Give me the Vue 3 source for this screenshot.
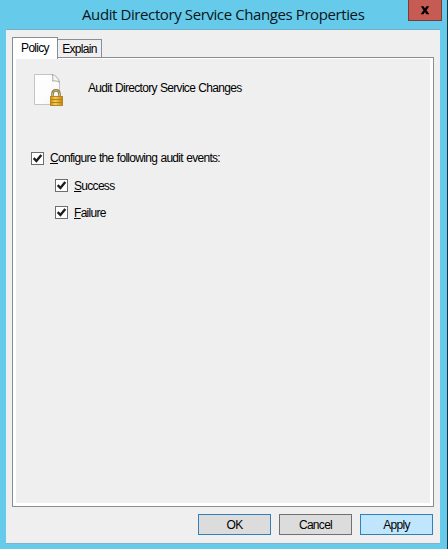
<template>
  <div class="window">
    <header class="titlebar">
      <h1 class="title">Audit Directory Service Changes Properties</h1>
      <button class="close" type="button" aria-label="Close">
        <svg width="10" height="9" viewBox="0 0 10 9">
          <path d="M0.8 0.3H3.6L5 2.6L6.4 0.3H9.2L6.5 4.2L9.4 8.2H6.5L5 5.9L3.5 8.2H0.6L3.5 4.2Z" fill="#000" />
        </svg>
      </button>
    </header>

    <main class="client">
      <nav class="tabs">
        <button
          v-for="tab in tabs"
          :key="tab"
          type="button"
          class="tab"
          :class="{ active: tab === activeTab }"
          @click="activeTab = tab"
        >{{ tab }}</button>
      </nav>

      <section class="panel">
        <div class="page">
          <div class="policy">
            <svg class="policy-icon" width="32" height="34" viewBox="0 0 32 34">
              <defs>
                <linearGradient id="paper" x1="0" y1="0" x2="1" y2="1">
                  <stop offset="0" stop-color="#fff" />
                  <stop offset="0.6" stop-color="#fcfcfc" />
                  <stop offset="1" stop-color="#f0f0f0" />
                </linearGradient>
                <linearGradient id="gold" x1="0" y1="0" x2="1" y2="0">
                  <stop offset="0" stop-color="#c98f1c" />
                  <stop offset="0.4" stop-color="#f3cd55" />
                  <stop offset="1" stop-color="#c08516" />
                </linearGradient>
              </defs>
              <path d="M1.5 1.5H19L26.5 9V31.5H1.5Z" fill="url(#paper)" stroke="#c4c4c4" />
              <path d="M19 1.5C20 4 20 6 19.5 8C22 7.6 25 8 26.5 9.5C26 6 22.5 2 19 1.5Z" fill="#f6f6f6" stroke="#a6a6a6" />
              <path d="M19.5 24V21C19.5 18.3 20.8 17.4 23 17.4S26.5 18.3 26.5 21V24" fill="none" stroke="#8f7a45" stroke-width="2.6" />
              <path d="M19.5 24V21C19.5 18.4 20.8 17.6 23 17.6S26.5 18.4 26.5 21V24" fill="none" stroke="#c9b67c" stroke-width="1" />
              <rect x="17.5" y="23.5" width="12" height="9" fill="url(#gold)" stroke="#bd861a" />
              <path d="M18 26.5H29M18 29.5H29" stroke="#b58018" />
            </svg>
            <span>Audit Directory Service Changes</span>
          </div>

          <label
            v-for="option in options"
            :key="option.key"
            class="option"
            :class="{ nested: option.nested }"
          >
            <input v-model="option.checked" type="checkbox" class="native">
            <span class="box">
              <svg v-if="option.checked" width="11" height="11" viewBox="0 0 11 11">
                <path d="M1.7 5.2L4.4 8L9.3 2" fill="none" stroke="#1c1c1c" stroke-width="2.4" />
              </svg>
            </span>
            <span class="label"><u>{{ option.key }}</u>{{ option.rest }}</span>
          </label>
        </div>
      </section>

      <footer class="actions">
        <button type="button" class="btn default">OK</button>
        <button type="button" class="btn">Cancel</button>
        <button type="button" class="btn hot">Apply</button>
      </footer>
    </main>
  </div>
</template>

<script setup>
import { ref } from 'vue';

const tabs = ['Policy', 'Explain'];
const activeTab = ref('Policy');

const options = ref([
  { key: 'C', rest: 'onfigure the following audit events:', checked: true, nested: false },
  { key: 'S', rest: 'uccess', checked: true, nested: true },
  { key: 'F', rest: 'ailure', checked: true, nested: true }
]);
</script>

<style>
body {
  margin: 0;
}
</style>

<style scoped>
.window {
  box-sizing: border-box;
  width: 448px;
  height: 549px;
  padding: 0 7px 5px 6px;
  border-right: 1px solid #20303a;
  background: #66cbea;
  color: #000;
  font: 12px/14px "Liberation Sans", Arial, sans-serif;
  letter-spacing: -0.7px;
  word-spacing: 0.6px;
  overflow: hidden;
}

button {
  padding: 0;
  color: inherit;
  font: inherit;
  letter-spacing: inherit;
}

.titlebar {
  display: flex;
  height: 29px;
  margin-right: -2px;
}

.title {
  flex: 1;
  margin: 0;
  padding: 4px 0 0 76px;
  color: #0a151a;
  font: 15px/21px "Open Sans", sans-serif;
  letter-spacing: -0.4px;
  word-spacing: 0;
  white-space: nowrap;
}

.close {
  display: flex;
  align-items: center;
  justify-content: center;
  box-sizing: border-box;
  width: 34px;
  height: 21px;
  border: 1px solid #7c3a3a;
  border-top: 0;
  background: #c55b52;
}

.client {
  box-sizing: border-box;
  height: 515px;
  padding: 7px 6px 0;
  border-top: 1px solid #73afcb;
  border-bottom: 1px solid #7fb2c6;
  background: #efefef;
}

.tabs {
  display: flex;
  align-items: flex-end;
  height: 20px;
}

.tab {
  box-sizing: border-box;
  width: 44px;
  height: 18px;
  border: 1px solid #8b8c94;
  border-left: 0;
  border-bottom: 0;
  background: #efefef;
}

.tab.active {
  z-index: 1;
  width: 46px;
  height: 22px;
  margin-bottom: -2px;
  padding-bottom: 2px;
  border-left: 1px solid #8b8c94;
  background: #fff;
}

.panel {
  box-sizing: border-box;
  width: 422px;
  height: 450px;
  padding: 1px 3px 3px;
  border: 1px solid #8b8c94;
  background: #fff;
}

.page {
  box-sizing: border-box;
  height: 100%;
  padding: 14px 15px 0;
  background: #efefef;
}

.policy {
  display: flex;
  gap: 23px;
  height: 77px;
  margin-left: 2px;
}

.policy span {
  padding-top: 8px;
}

.option {
  display: flex;
  align-items: center;
  gap: 6px;
  width: max-content;
  height: 17px;
  margin-bottom: 10px;
}

.option:not(.nested) .label {
  padding-bottom: 2px;
}

.option.nested {
  margin-left: 24px;
}

.native {
  position: absolute;
  opacity: 0;
}

.box {
  box-sizing: border-box;
  width: 13px;
  height: 13px;
  border: 1px solid #6d6d6d;
  background: #fff;
}

.box svg {
  display: block;
}

.actions {
  display: flex;
  justify-content: flex-end;
  gap: 8px;
  padding: 7px 1px 0 0;
}

.btn {
  box-sizing: border-box;
  width: 73px;
  height: 21px;
  border: 1px solid #707070;
  background: #dcdcdc;
}

.btn.default {
  border-color: #3380b9;
}

.btn.hot {
  border-color: #3380b9;
  background: #bfe6fd;
}
</style>
